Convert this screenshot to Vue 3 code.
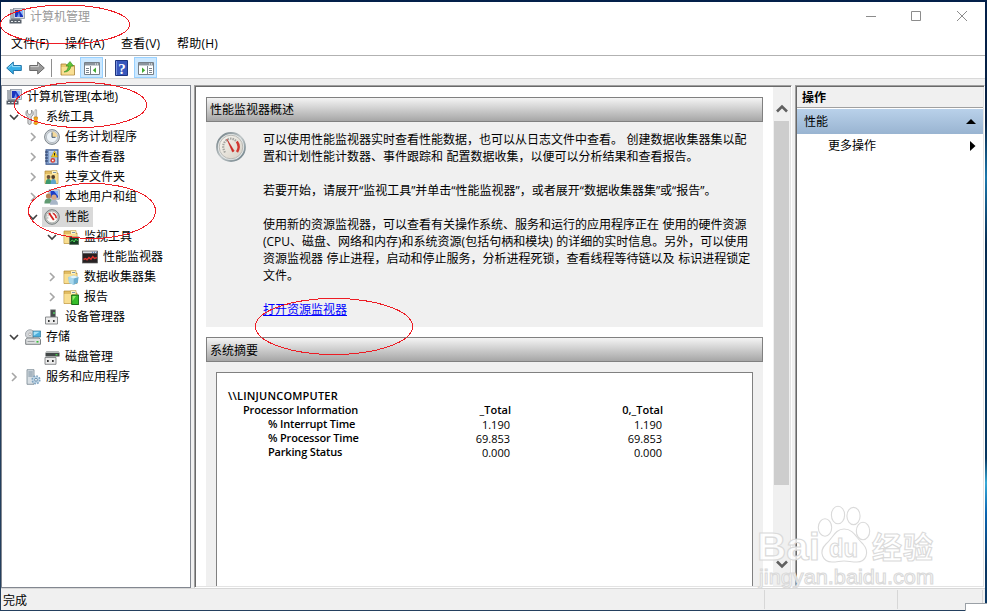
<template>
  <div class="desktop">
    <svg class="icon-defs" width="0" height="0">
      <symbol id="computer" viewBox="0 0 16 16">
        <rect x="4.5" y=".5" width="11" height="10" fill="#d7dbe2" stroke="#8c95a3" stroke-width=".8" />
        <rect x="6" y="2" width="8" height="7" fill="#1b35bd" />
        <path d="M10 2h4v6z" fill="#8db8fa" />
        <path d="M8 9l2-5 1 5z" fill="#6f92ee" />
        <rect x="1.5" y="1.5" width="3.5" height="9" fill="#a8aeb5" stroke="#858c94" stroke-width=".5" />
        <path d="M2 10h9v2H2z" fill="#8b929b" />
        <path d="M.5 11.5h12v4H.5z" fill="#59616b" />
        <path d="M2 13.5h2M5.5 13.5h2M9 13.5h2" stroke="#e5e9ec" />
      </symbol>
      <symbol id="tools" viewBox="0 0 16 16">
        <path d="M2.5 1v3l2 2 2-2V1l1.7 1.8v3L6.2 8v6.5q-1.7 2-3.3 0V8L1 5.8v-3z" fill="#d3d6d9" stroke="#777" stroke-width=".7" />
        <path d="M10 .8h1.6v7H10z" fill="#f4f4f4" stroke="#888" stroke-width=".6" />
        <path d="M9 8h3.5v2l-.7 1 1 3.5-1 1h-2l-1-1 1-3.5-.8-1z" fill="#f3a817" stroke="#c47a0a" stroke-width=".6" />
      </symbol>
      <symbol id="clock" viewBox="0 0 16 16">
        <circle cx="8" cy="8" r="7.4" fill="#d6d9dc" stroke="#717a82" stroke-width=".9" />
        <circle cx="8" cy="8" r="5.6" fill="#edf3f8" stroke="#a3adb5" stroke-width=".7" />
        <path d="M8 2.5A5.5 5.5 0 0 1 13.4 8H8z" fill="#f3d99d" />
        <path d="M8 3.5V8.3h3.5" fill="none" stroke="#44576b" />
      </symbol>
      <symbol id="event" viewBox="0 0 16 16">
        <rect x="2" y=".8" width="12" height="14.5" fill="#7f9cc9" stroke="#405c91" />
        <path d="M5 2h8v12H5z" fill="#c3d6ef" />
        <path d="M5 4h8M5 6h8M5 8h8M5 10h8M5 12h8" stroke="#7c9ecb" stroke-width=".6" />
        <path d="M1 3h3M1 6h3M1 9h3M1 12h3" stroke="#26395e" />
        <path d="M10.5 2l3.2 6H7.3z" fill="#f5ce21" stroke="#b38a00" stroke-width=".5" />
        <path d="M10.5 4v2.5" stroke="#222" />
        <circle cx="8.8" cy="11.4" r="2.4" fill="#d94036" />
        <circle cx="8.8" cy="11.4" r=".9" fill="#fff" />
      </symbol>
      <symbol id="folder" viewBox="0 0 16 16">
        <path d="M1 2h6l1.5 2H14v10.5H1z" fill="#e2bd63" stroke="#b68b32" stroke-width=".7" />
        <path d="M7.5 1.5H13V6H7.5z" fill="#fff3c0" stroke="#b99a48" stroke-width=".6" />
        <path d="M9 3.5h3" stroke="#7a94a8" />
        <path d="M1.3 5h12.4v9.2H1.3z" fill="#f8de91" />
      </symbol>
      <symbol id="shared" viewBox="0 0 16 16">
        <use href="#folder" />
        <circle cx="4.5" cy="8" r="1.9" fill="#6b5138" />
        <circle cx="9.2" cy="8" r="1.9" fill="#4c3b2a" />
        <path d="M1.5 15q0-5 3-5t3 5z" fill="#3d986f" />
        <path d="M6.6 15q0-5 2.8-5t2.8 5z" fill="#5ea5cc" />
      </symbol>
      <symbol id="users" viewBox="0 0 16 16">
        <path d="M5 .7h10.3v9.5H5z" fill="#d5dae3" stroke="#828e9e" stroke-width=".7" />
        <path d="M6.5 2h7.5v6.7H6.5z" fill="#1d3fc6" />
        <path d="M10 2h4v5z" fill="#87b4f7" />
        <circle cx="4.5" cy="7" r="2.6" fill="#b98659" />
        <circle cx="10" cy="8.2" r="2.6" fill="#d8a883" />
        <path d="M.4 14.5q0-5 4-5t4 5z" fill="#629b72" />
        <path d="M6 15.8q0-5 4-5t4 5z" fill="#a8b6c8" />
      </symbol>
      <symbol id="gauge" viewBox="0 0 16 16">
        <circle cx="8" cy="8" r="7.3" fill="#c7cbca" stroke="#737a79" />
        <circle cx="8" cy="8" r="5.8" fill="#fcfaf7" stroke="#9da29f" stroke-width=".6" />
        <path d="M3.8 9.5Q3.4 4.5 8 3.8q4.5.6 4 5.8" fill="none" stroke="#888" stroke-dasharray="1 1" />
        <path d="M5 4L9.8 11" stroke="#d3201c" stroke-width="1.8" />
        <path d="M9 4.3q3.2 1.3 3.2 5" fill="none" stroke="#d3201c" stroke-width="1.4" />
      </symbol>
      <symbol id="monitor-folder" viewBox="0 0 16 16">
        <use href="#folder" />
        <rect x="6.7" y="8" width="9" height="7.5" fill="#173b22" stroke="#5e6a61" stroke-width=".7" />
        <path d="M7.5 12.5l2-1.5 1.7 2 1.5-3 2 2" fill="none" stroke="#4fe05b" />
      </symbol>
      <symbol id="perfmon" viewBox="0 0 16 16">
        <rect x=".4" y="2" width="15.2" height="12" fill="#272223" stroke="#666" stroke-width=".7" />
        <path d="M1 2.3h14v2H1z" fill="#d8dce1" />
        <path d="M10 3.3h1m1 0h1m1 0h1" stroke="#3669ad" />
        <path d="M1.5 10.5l2-1 1.5 1.2 2-2.2 2 1.7 1.8-2.5 1.7 1.8 2.4-1" fill="none" stroke="#df342f" stroke-width="1.4" />
      </symbol>
      <symbol id="collector" viewBox="0 0 16 16">
        <use href="#folder" />
        <path d="M5.5 8l5-1.5L15.6 8 14.8 14l-4 1.7L6 14z" fill="#6fb0d2" />
        <path d="M5.5 8l5.2 1.5v6.2L6 14z" fill="#a9d8ec" />
        <path d="M5.5 8l5-1.5L15.6 8l-4.9 1.5z" fill="#e0f4fb" />
      </symbol>
      <symbol id="report" viewBox="0 0 16 16">
        <use href="#folder" />
        <path d="M8.7 6h7v9.6h-7z" fill="#36bd2a" stroke="#116510" />
        <path d="M9.5 7h3.5l-3.5 5z" fill="#91ec69" />
      </symbol>
      <symbol id="device" viewBox="0 0 16 16">
        <path d="M6.5.7h5v8h-5z" fill="#454b4b" stroke="#8a8f8f" stroke-width=".5" />
        <path d="M10 3v2" stroke="#54dd66" stroke-width="1.3" />
        <path d="M1.5 8h12v7h-12z" fill="#ececec" stroke="#717577" stroke-width=".8" />
        <path d="M4 11h1.6v2H4zM9 11h1.6v2H9z" fill="#333" />
      </symbol>
      <symbol id="storage" viewBox="0 0 16 16">
        <circle cx="5" cy="5.3" r="4.6" fill="#d2d5d8" stroke="#8b9298" stroke-width=".7" />
        <circle cx="5" cy="5.3" r="1.3" fill="#fff" stroke="#888" stroke-width=".6" />
        <path d="M8 2h7.7v6H8z" fill="#4dafdc" stroke="#36708c" stroke-width=".7" />
        <path d="M8.7 2.7h6l-6 4z" fill="#a7e1f7" />
        <path d="M.7 10.5l1.5-1.5h12l1.3 1.5v4.8H.7z" fill="#dddfe0" stroke="#6e7477" stroke-width=".9" />
        <path d="M2.5 12.5h7" stroke="#9da2a4" />
        <path d="M11.5 12.8h2" stroke="#2dc12e" stroke-width="1.5" />
      </symbol>
      <symbol id="disk" viewBox="0 0 16 16">
        <path d="M2.5 2.5h12l1 1.5v3.5h-14V4z" fill="#414747" />
        <path d="M2.5 2.3h12l1 1.7h-14z" fill="#b9bdbd" />
        <path d="M11.5 5.8h2" stroke="#45df4a" stroke-width="1.2" />
        <path d="M1 8.5h11v6.8H1z" fill="#ececec" stroke="#717577" stroke-width=".8" />
        <path d="M3 11h1.7v2H3zM8 11h1.7v2H8z" fill="#333" />
      </symbol>
      <symbol id="services" viewBox="0 0 16 16">
        <path d="M2 .7h7v14.6H2z" fill="#d8dfe4" stroke="#768591" stroke-width=".8" />
        <path d="M3.3 3h4.5M3.3 5h4.5M3.3 7h4.5" stroke="#6e8595" stroke-width=".9" />
        <circle cx="11" cy="10.8" r="3.6" fill="#c9deee" stroke="#7ea3c0" stroke-width="2" stroke-dasharray="1.6 1.2" />
        <circle cx="11" cy="10.8" r="3" fill="#bcd3e5" />
        <circle cx="11" cy="10.8" r="1.4" fill="#fff" stroke="#58809e" stroke-width=".8" />
      </symbol>
    </svg>

    <div class="window">
      <div class="title-bar">
        <svg class="icon"><use href="#computer" /></svg>
        <span class="title">计算机管理</span>
        <svg class="controls" width="102" height="12" viewBox="0 0 102 12">
          <path d="M0 6.5h10M45.5 1.5h9v9h-9zM91 1l10 10M101 1L91 11" fill="none" stroke="#8c8c8c" />
        </svg>
      </div>
      <div class="menu-bar">
        <span v-for="item in menus" :key="item">{{ item }}</span>
      </div>
      <div class="toolbar">
        <svg class="icon back" viewBox="0 0 16 16">
          <path d="M.7 8l6.6-6v3.5h8v5h-8V14z" fill="#35aee6" stroke="#2376a9" />
          <path d="M2.4 7.8l4-3.6v2.4h8" fill="none" stroke="#9be0fb" />
        </svg>
        <svg class="icon forward" viewBox="0 0 16 16">
          <path d="M15.3 8L8.7 2v3.5h-8v5h8V14z" fill="#9b9b9b" stroke="#696969" />
          <path d="M1.5 6.6h8V4" fill="none" stroke="#cfcfcf" />
        </svg>
        <i class="separator"></i>
        <svg class="icon up" viewBox="0 0 16 16">
          <path d="M1 4h5l1.5 1.5h7V15H1z" fill="#e9c66d" stroke="#a88438" stroke-width=".8" />
          <path d="M1.5 7h12.5v7.5h-12z" fill="#f9df93" />
          <path d="M4 12q4-1 4.5-6H6L10 1.5 13.5 6H11Q10 12 4 12z" fill="#62c537" stroke="#2d8821" stroke-width=".6" />
        </svg>
        <span class="tool-button first">
          <svg class="icon" viewBox="0 0 16 16">
            <path d="M.5 2.5h15v12H.5z" fill="#fff" stroke="#777f87" />
            <path d="M1 3h14v3H1z" fill="#8c959e" />
            <path d="M1 5.5h14" stroke="#c9ced3" />
            <path d="M11 4h1m1 0h1" stroke="#fff" />
            <path d="M6.5 6v8M2 8.5h3M2 10.5h3M2 12.5h3" stroke="#7c858d" />
            <path d="M12 7.5v5.4L8.8 10.2z" fill="#42a932" />
          </svg>
        </span>
        <i class="separator"></i>
        <svg class="help" width="13" height="16" viewBox="0 0 13 16">
          <path d="M.5.5h12v15H.5z" fill="#3857bc" stroke="#1d347f" />
          <path d="M1.5 1v14" stroke="#7891de" />
          <text x="7" y="13.5" text-anchor="middle">?</text>
        </svg>
        <span class="tool-button second">
          <svg class="icon" viewBox="0 0 16 16">
            <path d="M.5 2.5h15v12H.5z" fill="#fff" stroke="#777f87" />
            <path d="M1 3h14v3H1z" fill="#8c959e" />
            <path d="M1 5.5h14" stroke="#c9ced3" />
            <path d="M11 4h1m1 0h1" stroke="#fff" />
            <path d="M9.5 6v8M11 8.5h3M11 10.5h3M11 12.5h3" stroke="#7c858d" />
            <path d="M4 7.5v5.4l3.2-2.7z" fill="#42a932" />
          </svg>
        </span>
      </div>

      <div class="panels">
        <div class="tree">
          <div v-for="node in nodes" :key="node.text" class="tree-row" :style="{ paddingLeft: node.level * 19 + 4 + 'px' }">
            <svg v-if="node.arrow" class="arrow" :class="node.arrow" viewBox="0 0 10 10">
              <path :d="node.arrow === 'open' ? 'M1 3l4 4 4-4' : 'M3 1l4 4-4 4'" />
            </svg>
            <span class="node" :class="{ selected: node.selected }">
              <svg class="icon"><use :href="'#' + node.icon" /></svg>
              <span class="node-text">{{ node.text }}</span>
            </span>
          </div>
        </div>

        <div class="main sunken">
          <div class="content">
            <div class="section-header">性能监视器概述</div>
            <div class="overview">
              <svg class="big-gauge" viewBox="0 0 30 30">
                <defs>
                  <linearGradient id="rim" x1="0" y1="0" x2="1" y2="1">
                    <stop offset="0" stop-color="#68777e" />
                    <stop offset=".5" stop-color="#c2c8c9" />
                    <stop offset="1" stop-color="#61757e" />
                  </linearGradient>
                  <linearGradient id="dial" x1="0" y1="0" x2="1" y2="1">
                    <stop offset="0" stop-color="#f9f7f2" />
                    <stop offset="1" stop-color="#d6d0c5" />
                  </linearGradient>
                </defs>
                <circle cx="15" cy="15" r="14" fill="#e5e9e9" stroke="url(#rim)" stroke-width="1.8" />
                <circle cx="15" cy="15" r="11.8" fill="url(#dial)" stroke="#b9b9b5" />
                <path d="M9 20.5Q5 13 10 8.6t10.5.8" fill="none" stroke="#a5a5a1" stroke-width="2.2" stroke-dasharray="1.5 1" />
                <path d="M20.8 9.5q3.6 5 .2 10.5" fill="none" stroke="#d13730" stroke-width="2.4" />
                <path d="M10.8 7L18.2 19l-1.7 1z" fill="#d92520" stroke="#b51c18" stroke-width=".5" />
              </svg>
              <div class="overview-text">
                <p v-for="(lines, i) in paragraphs" :key="i">
                  <span v-for="line in lines" :key="line" class="line">{{ line }}</span>
                </p>
                <a class="link">打开资源监视器</a>
              </div>
            </div>
            <div class="section-header second-header">系统摘要</div>
            <div class="summary">
              <div class="summary-box">
                <div v-for="row in rows" :key="row.label" class="summary-row" :class="row.type">
                  <span class="label">{{ row.label }}</span>
                  <span class="value">{{ row.total }}</span>
                  <span class="value">{{ row.cpu }}</span>
                </div>
              </div>
            </div>
          </div>
          <div class="scrollbar">
            <svg class="scroll-arrow" viewBox="0 0 12 9"><path d="M1 7.5l5-5 5 5" /></svg>
            <div class="thumb"></div>
            <svg class="scroll-arrow down" viewBox="0 0 12 9"><path d="M1 1.5l5 5 5-5" /></svg>
          </div>
        </div>

        <div class="actions sunken">
          <div class="actions-title">操作</div>
          <div class="actions-group">
            <span>性能</span>
            <svg width="10" height="5" viewBox="0 0 10 5"><path d="M0 5l5-5 5 5z" /></svg>
          </div>
          <div class="actions-item">
            <span>更多操作</span>
            <svg width="6" height="10" viewBox="0 0 6 10"><path d="M0 0l5.5 5L0 10z" /></svg>
          </div>
        </div>
      </div>

      <div class="status-bar">
        <span class="status-text">完成</span>
        <span class="status-cell wide"></span>
        <span class="status-cell"></span>
      </div>
    </div>

    <div class="corner-box"></div>

    <svg class="overlay" width="987" height="611" viewBox="0 0 987 611">
      <g class="watermark">
        <text x="757" y="560" font-size="38" font-weight="700" textLength="63" lengthAdjust="spacingAndGlyphs">Bai</text>
        <ellipse cx="825" cy="527.5" rx="6.7" ry="8.7" />
        <ellipse cx="838" cy="515" rx="6.6" ry="8.8" />
        <ellipse cx="853.5" cy="516" rx="6.6" ry="8.6" />
        <ellipse cx="863" cy="531" rx="6.7" ry="8.7" />
        <path d="M844 529c-9 0-11 9-18 15-8 8-3 18 6 18 6 0 7-1 12-1s7 1 13 1c9 0 13-10 6-18-7-6-9-15-19-15z" />
        <text x="829" y="557" font-size="26" font-weight="700" textLength="29" lengthAdjust="spacingAndGlyphs">du</text>
        <text class="cjk" x="872" y="558" font-size="30" font-weight="700" textLength="61">经验</text>
        <text x="759" y="584" font-size="21" textLength="175" lengthAdjust="spacingAndGlyphs">jingyan.baidu.com</text>
      </g>
      <g class="marks">
        <ellipse cx="65" cy="24.5" rx="64.5" ry="19.5" />
        <ellipse cx="80.5" cy="105" rx="66" ry="22.5" />
        <ellipse cx="92" cy="211" rx="63.5" ry="27.5" />
        <ellipse cx="334" cy="326.5" rx="78.5" ry="28" />
      </g>
    </svg>
  </div>
</template>

<script setup>
const menus = ['文件(F)', '操作(A)', '查看(V)', '帮助(H)'];

const nodes = [
  { level: 0, icon: 'computer', text: '计算机管理(本地)' },
  { level: 1, icon: 'tools', text: '系统工具', arrow: 'open' },
  { level: 2, icon: 'clock', text: '任务计划程序', arrow: 'closed' },
  { level: 2, icon: 'event', text: '事件查看器', arrow: 'closed' },
  { level: 2, icon: 'shared', text: '共享文件夹', arrow: 'closed' },
  { level: 2, icon: 'users', text: '本地用户和组', arrow: 'closed' },
  { level: 2, icon: 'gauge', text: '性能', arrow: 'open', selected: true },
  { level: 3, icon: 'monitor-folder', text: '监视工具', arrow: 'open' },
  { level: 4, icon: 'perfmon', text: '性能监视器' },
  { level: 3, icon: 'collector', text: '数据收集器集', arrow: 'closed' },
  { level: 3, icon: 'report', text: '报告', arrow: 'closed' },
  { level: 2, icon: 'device', text: '设备管理器' },
  { level: 1, icon: 'storage', text: '存储', arrow: 'open' },
  { level: 2, icon: 'disk', text: '磁盘管理' },
  { level: 1, icon: 'services', text: '服务和应用程序', arrow: 'closed' }
];

const paragraphs = [
  [
    '可以使用性能监视器实时查看性能数据，也可以从日志文件中查看。 创建数据收集器集以配',
    '置和计划性能计数器、事件跟踪和 配置数据收集，以便可以分析结果和查看报告。'
  ],
  ['若要开始，请展开“监视工具”并单击“性能监视器”，或者展开“数据收集器集”或“报告”。'],
  [
    '使用新的资源监视器，可以查看有关操作系统、服务和运行的应用程序正在 使用的硬件资源',
    '(CPU、磁盘、网络和内存)和系统资源(包括句柄和模块) 的详细的实时信息。另外，可以使用',
    '资源监视器 停止进程，启动和停止服务，分析进程死锁，查看线程等待链以及 标识进程锁定',
    '文件。'
  ]
];

const rows = [
  { type: 'machine', label: '\\\\LINJUNCOMPUTER' },
  { type: 'object', label: 'Processor Information', total: '_Total', cpu: '0,_Total' },
  { type: 'counter', label: '% Interrupt Time', total: '1.190', cpu: '1.190' },
  { type: 'counter', label: '% Processor Time', total: '69.853', cpu: '69.853' },
  { type: 'counter', label: 'Parking Status', total: '0.000', cpu: '0.000' }
];
</script>

<style>
body {
  margin: 0;
  overflow: hidden;
}
</style>

<style scoped>
.desktop {
  position: relative;
  box-sizing: border-box;
  width: 987px;
  height: 611px;
  padding: 2px 2px 1px 1px;
  background:
    linear-gradient(#03204a, #082142 20%, #1b78ad 29%, #062b50 40%, #073760 75%, #38a9d6 79%, #0a64b0 84%, #0b3763 93%) right / 2px 100% no-repeat,
    linear-gradient(#03204a, #1f3a5c 20%, #24405f);
  font: 12px "Open Sans", "Noto Sans CJK SC", sans-serif;
  color: #000;
}

.icon-defs {
  position: absolute;
}

.window {
  display: flex;
  flex-direction: column;
  height: 608px;
  background: #f0f0f0;
}

.icon {
  display: block;
  width: 16px;
  height: 16px;
  flex: none;
}

.title-bar {
  display: flex;
  align-items: center;
  box-sizing: border-box;
  height: 30px;
  padding: 0 17px 2px 8px;
  background: #fff;
}

.title {
  flex: 1;
  margin-left: 5px;
  color: #999;
}

.menu-bar {
  display: flex;
  box-sizing: border-box;
  height: 24px;
  padding-left: 10px;
  line-height: 23px;
  background: #fff;
  border-bottom: 1px solid #b2b2b2;
}

.menu-bar span {
  width: 56px;
  letter-spacing: 0.2px;
}

.menu-bar span:first-child {
  width: 54px;
}

.toolbar {
  display: flex;
  align-items: center;
  box-sizing: border-box;
  height: 23px;
  padding-top: 1px;
  background: #fff;
  border-bottom: 1px solid #d9d9d9;
}

.back {
  margin-left: 5px;
}

.forward {
  margin-left: 7px;
  margin-right: 6px;
}

.separator {
  width: 1px;
  height: 18px;
  background: #8e8e8e;
}

.up {
  margin-left: 8px;
}

.tool-button {
  display: flex;
  align-items: center;
  justify-content: center;
  box-sizing: border-box;
  width: 23px;
  height: 21px;
  background: #cce8ff;
  border: 1px solid #99d1ff;
}

.first {
  margin: 0 2px 0 4px;
}

.second {
  margin-left: 6px;
}

.help {
  margin-left: 9px;
}

.help text {
  font: bold 15px "Liberation Serif", serif;
  fill: #fff;
}

.panels {
  display: flex;
  gap: 3px;
  height: 503px;
  padding-top: 6px;
}

.tree {
  box-sizing: border-box;
  width: 190px;
  padding-top: 1px;
  background: #fff;
  border: 1px solid #828790;
}

.tree-row {
  display: flex;
  align-items: center;
  height: 20px;
}

.arrow {
  width: 10px;
  height: 10px;
  margin-left: -16px;
  margin-right: 6px;
}

.arrow path {
  fill: none;
  stroke: #a6a6a6;
  stroke-width: 1.6;
}

.arrow.open path {
  stroke: #404040;
}

.node {
  display: flex;
  align-items: center;
  height: 20px;
}

.node-text {
  padding: 0 4px 2px 5px;
  white-space: nowrap;
}

.selected {
  margin-left: -2px;
  padding-left: 2px;
  background: #d9d9d9;
}

.sunken {
  box-sizing: border-box;
  border: 1px solid;
  border-color: #a0a0a0 #fff #fff #a0a0a0;
  box-shadow: inset 1px 1px #696969, inset -1px -1px #e3e3e3;
  background: #fff;
}

.main {
  display: flex;
  justify-content: space-between;
  width: 598px;
  padding: 1px 1px 1px 11px;
}

.content {
  display: flex;
  flex-direction: column;
  width: 557px;
  padding-top: 10px;
}

.section-header {
  box-sizing: border-box;
  height: 25px;
  padding-left: 3px;
  border: 1px solid #808080;
  background: linear-gradient(#f4f4f4, #a6a6a6);
  line-height: 24px;
}

.second-header {
  line-height: 25px;
}

.overview {
  display: flex;
  box-sizing: border-box;
  height: 205px;
  margin-bottom: 10px;
  padding: 10px 0 0 10px;
  background: #f0f0f0;
}

.big-gauge {
  width: 30px;
  height: 30px;
  margin-right: 17px;
  flex: none;
}

.overview-text {
  margin-top: -1px;
  line-height: 17px;
}

.overview-text p {
  margin: 0 0 17px;
}

.line {
  display: block;
  white-space: pre;
  word-spacing: 0.5px;
}

.link {
  color: #00f;
  text-decoration: underline;
}

.summary {
  flex: 1;
  display: flex;
  padding: 10px 10px 0;
  background: #f0f0f0;
}

.summary-box {
  flex: 1;
  padding: 16px 0 0 11px;
  background: #fff;
  border: 1px solid #808080;
  border-bottom: none;
}

.summary-row {
  display: flex;
  height: 14px;
  line-height: 14px;
  font-size: 11px;
}

.label {
  box-sizing: border-box;
  width: 131px;
  font-weight: 600;
  letter-spacing: -0.18px;
  white-space: nowrap;
}

.machine .label {
  letter-spacing: 0.2px;
}

.object .label {
  padding-left: 15px;
}

.counter .label {
  padding-left: 40px;
}

.value {
  width: 152px;
  text-align: right;
}

.counter .value {
  box-sizing: border-box;
  padding: 1px 1px 0 0;
}

.object .value {
  font-weight: 600;
}

.scrollbar {
  display: flex;
  flex-direction: column;
  align-items: center;
  width: 17px;
  background: #f0f0f0;
}

.scroll-arrow {
  width: 12px;
  height: 9px;
  margin: 17px 0 8px;
}

.scroll-arrow path {
  fill: none;
  stroke: #606060;
  stroke-width: 2.6;
}

.thumb {
  width: 15px;
  height: 364px;
  background: #cdcdcd;
}

.down {
  margin-top: 75px;
}

.actions {
  width: 190px;
  padding: 1px;
}

.actions-title {
  box-sizing: border-box;
  height: 21px;
  margin-bottom: 1px;
  padding-left: 5px;
  line-height: 21px;
  font-weight: bold;
  background: #f0f0f0;
  border-bottom: 1px solid #a0a0a0;
}

.actions-group {
  display: flex;
  align-items: center;
  justify-content: space-between;
  height: 25px;
  padding: 0 7px;
  background: linear-gradient(#b9d1ea, #99b4d1);
}

.actions-item {
  display: flex;
  align-items: center;
  justify-content: space-between;
  height: 23px;
  padding: 0 7px 0 31px;
}

.actions-group span,
.actions-item span {
  padding-bottom: 1px;
}

.status-bar {
  display: flex;
  box-sizing: border-box;
  height: 22px;
  padding: 1px 2px 1px 0;
  border-top: 1px solid #d7d7d7;
}

.status-text {
  width: 761px;
  padding-left: 2px;
  line-height: 21px;
  border-right: 1px solid #d7d7d7;
}

.status-cell {
  width: 84px;
  border-right: 1px solid #d7d7d7;
}

.wide {
  width: 132px;
}

.corner-box {
  position: absolute;
  right: 0;
  bottom: 0;
  width: 21px;
  height: 7px;
  background: #fff;
  border-top: 1px solid #9aa0a6;
  border-left: 1px solid #9aa0a6;
}

.overlay {
  position: absolute;
  left: 0;
  top: 0;
}

.watermark {
  fill: #fff;
  fill-opacity: 0.8;
  stroke: #dadada;
  stroke-width: 1.1;
  font-family: "Liberation Sans", sans-serif;
}

.cjk {
  font-family: "Noto Sans CJK SC", sans-serif;
}

.marks {
  fill: none;
  stroke: #ed1c24;
  shape-rendering: crispEdges;
}
</style>
